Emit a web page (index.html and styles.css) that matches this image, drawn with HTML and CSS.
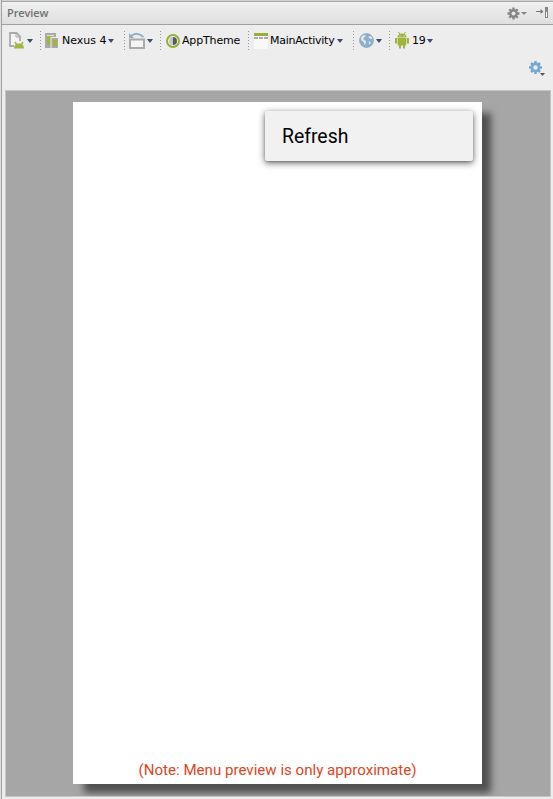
FILE: index.html
```
<!DOCTYPE html>
<html lang="en">
<head>
<meta charset="utf-8">
<title>Preview</title>
<link rel="stylesheet" href="styles.css">
</head>
<body>
<main class="panel">
  <header class="title">
    <h1>Preview</h1>
    <svg class="gear" width="13" height="13" viewBox="-6.5 -6.5 13 13"><path d="M0-6V6M-6 0H6M-4.2-4.2 4.2 4.2M-4.2 4.2 4.2-4.2" stroke="#858585" stroke-width="2.3"/><circle r="3.2" fill="none" stroke="#858585" stroke-width="2.4"/><circle r="2" fill="#e6e6e6"/></svg>
    <i class="arrow gray"></i>
    <svg class="hide" width="12" height="12" viewBox="0 0 12 12"><path d="M0 4.500H7" stroke="#777"/><path d="M4.500 2 7.500 4.500 4.500 7z" fill="#777"/><path d="M9 0h3v11H9z" fill="#858585"/><path d="M10 5h1v5h-1z" fill="#fff"/></svg>
  </header>
  <nav class="toolbar">
    <div class="group config">
      <svg width="16" height="18" viewBox="0 0 16 18"><path d="M5 14H1V1h6.500l3.500 3.500V9" fill="#f4f4f4" stroke="#aaa" stroke-width="1.800"/><path d="M7 1v4h4" fill="none" stroke="#aaa"/><path d="M5 16.500q.2-4.800 5-5t5 5z" fill="#a2b442"/><path d="M6 10l2 3M14 10l-2 3" stroke="#a2b442" stroke-width="1.500"/></svg>
      <i class="arrow"></i>
    </div>
    <div class="group device">
      <svg width="14" height="18" viewBox="0 0 14 18"><path d="M0 1h11v5H7v10H0z" fill="#aaa"/><path d="M2 4h5v9H2z" fill="#a2b442"/><path d="M2 3h7v1H2z" fill="#e6e6e6"/><path d="M5.500 5H14v12H5.500z" fill="#eee"/><path d="M6.500 6h6.500v10H6.500z" fill="#aaa"/><path d="M8 8h4v6H8z" fill="#a2b442"/></svg>
      <span>Nexus 4</span><i class="arrow"></i>
    </div>
    <div class="group rotate">
      <svg width="16" height="18" viewBox="0 0 16 18"><path d="M1 7.500h14v8.500H1z" fill="#f4f4f4" stroke="#aaa" stroke-width="2"/><path d="M2 4Q8-1 14.500 5" fill="none" stroke="#8dafc7" stroke-width="1.800"/><path d="M0 1v5h5z" fill="#8dafc7"/></svg>
      <i class="arrow"></i>
    </div>
    <div class="group theme">
      <svg width="14" height="14" viewBox="0 0 14 14"><circle cx="7" cy="7" r="6" fill="#f1f1ed" stroke="#98ab3b" stroke-width="1.900"/><path d="M7 3a4 4 0 0 0 0 8z" fill="#c3c5c3"/><path d="M7 3a4 4 0 0 1 0 8z" fill="#555c61"/></svg>
      <span>AppTheme</span>
    </div>
    <div class="group activity">
      <svg width="14" height="16" viewBox="0 0 14 16"><path d="M0 0h14v16H0z" fill="#f8f8f8"/><path d="M0 0h14v3H0z" fill="#9aad3c"/><path d="M0 4h4v2H0zM5 4h4v2H5zM10 4h4v2h-4z" fill="#aaa"/></svg>
      <span>MainActivity</span><i class="arrow"></i>
    </div>
    <div class="group locale">
      <svg width="15" height="15" viewBox="0 0 15 15"><circle cx="7.500" cy="7.500" r="7" fill="#8eaeca" stroke="#7f9fb9" stroke-width=".6"/><path d="M2 4.500 4.500 2 7 2.500 6 4 4.500 5v1.500L7 8v2l-1.500 2L4.500 9 2 7zM9.500 3.500l2.500-.5 1.500 2.500-2 .5-1.500-1zM9.500 8.500l2.500.5-1.500 3z" fill="#e0e8ee"/></svg>
      <i class="arrow"></i>
    </div>
    <div class="group version">
      <svg width="14" height="17" viewBox="0 0 14 17"><path d="M2.500 5.500Q2.500 1.500 7 1.500t4.500 4z" fill="#a0b33f"/><path d="M3.500 0 5 2.500M10.500 0 9 2.500" stroke="#a0b33f"/><path d="M5 12v4.500M9 12v4.500" stroke="#a0b33f" stroke-width="2"/><path d="M2.800 6h8.400v7.500H2.800zM0 6h2.200v5.500H0zM11.800 6H14v5.500h-2.200z" fill="#a0b33f"/><path d="M4.500 3.500h1v1h-1zM8.500 3.500h1v1h-1z" fill="#eee"/></svg>
      <span>19</span><i class="arrow"></i>
    </div>
  </nav>
  <div class="options">
    <svg width="17" height="16" viewBox="-6.500 -6.500 17 16"><path d="M0-6.500V6.500M-6.500 0H6.500M-4.500-4.500 4.500 4.500M-4.500 4.500 4.500-4.500" stroke="#75a9cf" stroke-width="2.500"/><circle r="3.600" fill="none" stroke="#75a9cf" stroke-width="2.600"/><circle r="2.200" fill="#e5edf1"/><path d="M4.500 5.500h5L7 8.500z" fill="#555"/></svg>
  </div>
  <section class="canvas">
    <div class="screen">
      <div class="menu">Refresh</div>
      <p class="note">(Note: Menu preview is only approximate)</p>
    </div>
  </section>
</main>
</body>
</html>
```
FILE: styles.css
```
* { box-sizing: border-box; }
body {
  margin: 0;
  height: 799px;
  overflow: hidden;
  background: #ededed;
  font: 11px "DejaVu Sans", sans-serif;
  color: #000;
}
svg { display: block; flex: none; }
.panel {
  height: 799px;
  border-left: 1px solid #e0e0e0;
  display: flex;
  flex-direction: column;
  box-shadow: inset 1px 0 #a0a0a0;
}
.title {
  height: 25px;
  flex: none;
  display: flex;
  align-items: center;
  margin-left: 1px;
  padding: 1px 5px 0 5px;
  border-top: 1px solid #d0d0d0;
  border-bottom: 1px solid #a0a0a0;
  box-shadow: inset 0 1px #aaa;
  background: linear-gradient(#f1f1f1, #dfdfdf);
}
.title h1 {
  margin: 0 auto 0 0;
  padding-bottom: 1px;
  font: 600 11px "Open Sans", sans-serif;
  letter-spacing: -.1px;
  color: #707070;
}
.arrow {
  flex: none;
  width: 6px;
  height: 4px;
  margin-left: 2px;
  background: #3d4c70;
  clip-path: polygon(0 0, 100% 0, 100% 15%, 58% 100%, 42% 100%, 0 15%);
}
.arrow.gray { background: #858585; margin-left: 1px; height: 3px; }
.hide { margin-left: 9px; }
.toolbar {
  height: 31px;
  flex: none;
  display: flex;
  align-items: center;
  padding-left: 8px;
}
.group { height: 20px; display: flex; align-items: center; position: relative; }
.group + .group { padding-left: 5px; }
.group + .group::before {
  content: "";
  position: absolute;
  left: 0;
  top: 0;
  width: 1px;
  height: 20px;
  background: repeating-linear-gradient(#999 0 1px, transparent 1px 3px);
}
.group span { white-space: nowrap; }
.config { width: 31px; }
.device { width: 84px; }
.device span { margin-left: 3px; width: 44px; }
.rotate { width: 36px; }
.theme { width: 88px; }
.theme span { margin-left: 2px; letter-spacing: -.15px; }
.group.theme, .group.activity, .group.locale, .group.version { padding-left: 6px; }
.activity { width: 105px; }
.activity span { margin-left: 2px; width: 65px; letter-spacing: -.25px; }
.locale { width: 36px; }
.version span { margin-left: 3px; width: 14px; letter-spacing: -.3px; }
.version .arrow { margin-left: 1px; }
.options {
  height: 34px;
  flex: none;
  display: flex;
  justify-content: flex-end;
  padding: 5px 7px 0 0;
}
.canvas {
  width: 546px;
  height: 707px;
  margin-left: 4px;
  padding: 11px 0 0 67px;
  border: 1px solid #c6c6c6;
  background: #a6a6a6;
  overflow: hidden;
}
.screen {
  width: 409px;
  height: 682px;
  display: flex;
  flex-direction: column;
  justify-content: space-between;
  padding: 9px 9px 5px;
  background: #fff;
  box-shadow: 10px 10px 7px -1px #505050;
  font-family: Roboto, sans-serif;
}
.menu {
  align-self: flex-end;
  width: 208px;
  height: 50px;
  padding-left: 17px;
  background: #f1f1f1;
  border-radius: 2px;
  box-shadow: 0 2px 7px rgba(0, 0, 0, .6), 0 1px 2px rgba(0, 0, 0, .2);
  font-size: 19.4px;
  line-height: 51px;
}
.note {
  margin: 0;
  text-align: center;
  font-size: 15.1px;
  line-height: 18px;
  color: #dc4523;
}
```
